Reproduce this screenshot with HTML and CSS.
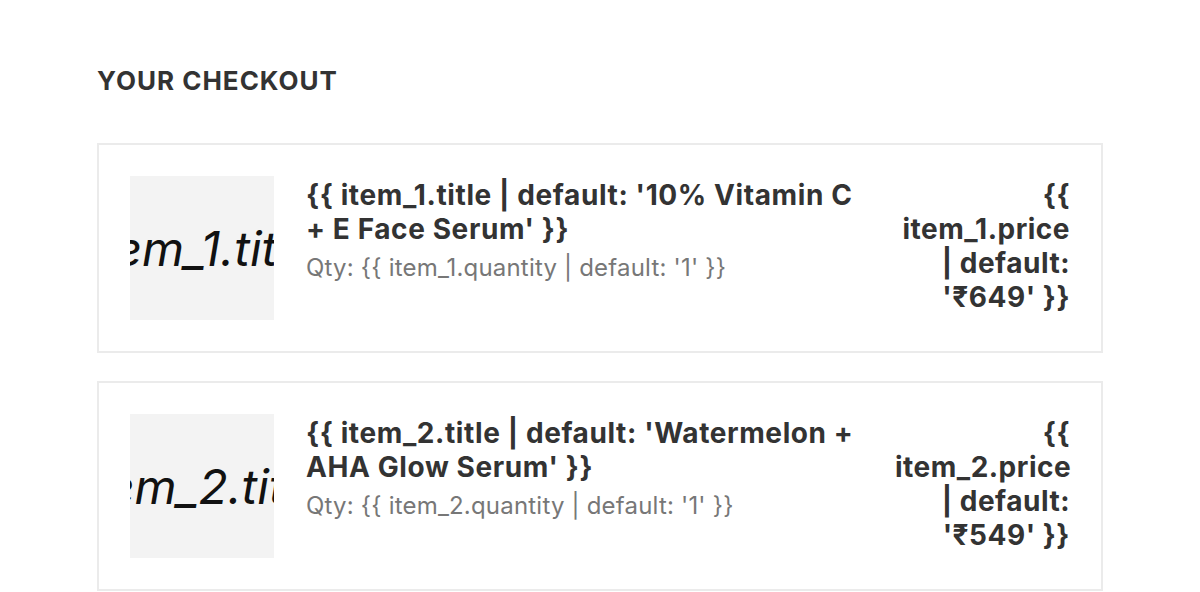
FILE: index.html
```html
<!DOCTYPE html>
<html>
<head>
<meta charset="utf-8">
<link rel="stylesheet" href="styles.css">
</head>
<body>
<div class="checkout">
  <h2 class="heading">YOUR CHECKOUT</h2>
  <div class="item">
    <div class="thumb"><span class="alt">{{ item_1.title }}</span></div>
    <div class="info">
      <div class="title">{{ item_1.title | default: '10% Vitamin C + E Face Serum' }}</div>
      <div class="qty">Qty: {{ item_1.quantity | default: '1' }}</div>
    </div>
    <div class="price">{{ item_1.price | default: '₹649' }}</div>
  </div>
  <div class="item">
    <div class="thumb"><span class="alt">{{ item_2.title }}</span></div>
    <div class="info">
      <div class="title">{{ item_2.title | default: 'Watermelon + AHA Glow Serum' }}</div>
      <div class="qty">Qty: {{ item_2.quantity | default: '1' }}</div>
    </div>
    <div class="price">{{ item_2.price | default: '₹549' }}</div>
  </div>
</div>
</body>
</html>
```
FILE: styles.css
```css
html, body {
  margin: 0;
  padding: 0;
  background: #ffffff;
}
body {
  font-family: Inter, "Noto Sans", sans-serif;
  color: #333333;
}
.checkout {
  width: 1006px;
  margin: 0 auto;
  padding-top: 64px;
}
.heading {
  margin: 0 0 46px 0;
  font-size: 26px;
  line-height: 33px;
  font-weight: 700;
  letter-spacing: 1px;
  color: #333333;
}
.item {
  display: grid;
  grid-template-columns: 144px 1fr 175px;
  column-gap: 32px;
  align-items: start;
  border: 2px solid #ebebeb;
  padding: 31px;
  margin-bottom: 28px;
}
.thumb {
  width: 144px;
  height: 144px;
  background: #f3f3f3;
  overflow: hidden;
  display: flex;
  align-items: center;
  justify-content: center;
}
.alt {
  white-space: nowrap;
  font-style: italic;
  font-size: 48px;
  color: #111111;
}
.title {
  padding-top: 2px;
  font-size: 28px;
  line-height: 34px;
  font-weight: 700;
  letter-spacing: 0.6px;
  color: #333333;
}
.qty {
  margin-top: 7px;
  font-size: 24px;
  line-height: 30px;
  letter-spacing: 0.2px;
  color: #777777;
}
.price {
  padding-top: 2px;
  text-align: right;
  font-size: 28px;
  line-height: 34px;
  font-weight: 700;
  letter-spacing: 0.5px;
  color: #333333;
}
```
